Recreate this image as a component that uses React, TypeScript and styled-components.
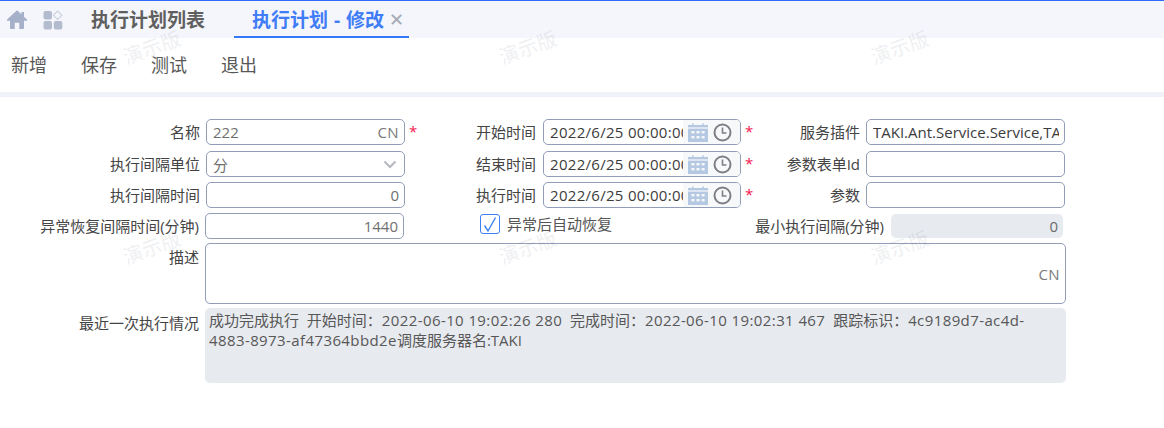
import React from "react";
import styled, { createGlobalStyle } from "styled-components";

const FONT = `"Open Sans", "Noto Sans CJK SC", sans-serif`;

const Global = createGlobalStyle`
  html, body { margin: 0; padding: 0; background: #fff; }
  body { font-family: ${FONT}; font-size: 15px; color: #333; }
  * { box-sizing: border-box; }
`;

const Page = styled.div`
  position: relative;
  width: 1164px;
  height: 428px;
  overflow: hidden;
  background: #fff;
`;

const TabBar = styled.div`
  height: 38px;
  border-top: 1px solid #2f6bff;
  background: #f4f6fb;
  display: flex;
  align-items: flex-start;
`;

const IconSlot = styled.div<{ $w: number }>`
  width: ${(p) => p.$w}px;
  height: 37px;
  display: flex;
  align-items: center;
  justify-content: center;
  flex: none;
`;

const TabPlain = styled.div`
  width: 143px;
  height: 37px;
  display: flex;
  align-items: center;
  font-size: 19px;
  font-weight: 700;
  color: #5f5f5f;
  padding-bottom: 1px;
  flex: none;
  white-space: pre;
`;

const TabActive = styled.div`
  width: 175px;
  height: 37px;
  padding-left: 18px;
  display: flex;
  align-items: center;
  font-size: 19px;
  font-weight: 700;
  color: #3f7cf6;
  border-bottom: 2px solid #3478f6;
  flex: none;
  white-space: pre;
  word-spacing: 1px;
`;

const TabClose = styled.span`
  margin-left: 5px;
  font-size: 18px;
  font-weight: 400;
  color: #a3a9b5;
  line-height: 1;
`;

const Toolbar = styled.div`
  height: 54px;
  background: #fff;
  display: flex;
  align-items: center;
  padding: 0 0 1px 11px;
  gap: 34px;
`;

const ToolButton = styled.div`
  font-size: 18px;
  color: #575757;
  line-height: 24px;
`;

const Band = styled.div`
  height: 5px;
  background: #eff3f9;
`;

const Form = styled.div`
  padding-top: 22px;
  display: flex;
  flex-direction: column;
`;

const Row = styled.div<{ $mt?: number }>`
  display: flex;
  align-items: flex-start;
  margin-top: ${(p) => p.$mt ?? 0}px;
`;

const Label = styled.div<{ $w: number; $gap?: number; $top?: number }>`
  width: ${(p) => p.$w}px;
  margin-right: ${(p) => p.$gap ?? 6}px;
  padding-top: ${(p) => p.$top ?? 2}px;
  text-align: right;
  font-size: 15px;
  line-height: 22px;
  color: #444;
  white-space: nowrap;
  flex: none;
`;

const Box = styled.div<{ $w: number; $h?: number; $align?: string }>`
  width: ${(p) => p.$w}px;
  height: ${(p) => p.$h ?? 26}px;
  border: 1px solid #929db8;
  border-radius: 5px;
  background: #fff;
  display: flex;
  align-items: center;
  justify-content: ${(p) => p.$align ?? "flex-start"};
  padding: 0 5px 0 6px;
  font-size: 15px;
  color: #707070;
  white-space: nowrap;
  overflow: hidden;
  flex: none;
`;

const Suffix = styled.span`
  margin-left: auto;
  color: #7a7a7a;
  letter-spacing: 0.4px;
`;

const Chevron = styled.svg`
  margin-left: auto;
  margin-right: 2px;
`;

const DateText = styled.div`
  flex: none;
  width: 134px;
  overflow: hidden;
  color: #3c3c3c;
  letter-spacing: 0.3px;
`;

const DateIcons = styled.div`
  flex: none;
  height: 24px;
  width: 58px;
  margin-left: -1px;
  background: #f7f8fa;
  display: flex;
  align-items: center;
  gap: 5px;
  padding-left: 5px;
`;

const PluginText = styled.div`
  overflow: hidden;
  color: #3c3c3c;
  width: 100%;
`;

const Star = styled.span<{ $w: number }>`
  width: ${(p) => p.$w}px;
  padding: 4px 0 0 4px;
  color: #f5184f;
  font-size: 15px;
  line-height: 16px;
  flex: none;
`;

const CheckWrap = styled.div`
  width: 20px;
  height: 20px;
  margin: 1px 7px 0 76px;
  border: 1px solid #3b82f0;
  border-radius: 3px;
  display: flex;
  align-items: center;
  justify-content: center;
  flex: none;
`;

const CheckText = styled.div`
  width: 126px;
  flex: none;
  font-size: 15px;
  line-height: 20px;
  color: #555;
  white-space: nowrap;
  padding-top: 1px;
`;

const Disabled = styled.div<{ $w: number }>`
  width: ${(p) => p.$w}px;
  height: 24px;
  margin-top: 1px;
  background: #e7eaef;
  border-radius: 5px;
  display: flex;
  align-items: center;
  justify-content: flex-end;
  padding-right: 5px;
  color: #6b6b6b;
  font-size: 15px;
  flex: none;
`;

const StatusBox = styled.div`
  width: 861px;
  height: 75px;
  background: #e7eaef;
  border-radius: 5px;
  padding: 2px 30px 0 4px;
  font-size: 15px;
  line-height: 20px;
  color: #575757;
  white-space: pre-wrap;
  flex: none;
`;

const Num = styled.span`
  letter-spacing: 0.4px;
`;

const Watermark = styled.div<{ $x: number; $y: number }>`
  position: absolute;
  left: ${(p) => p.$x}px;
  top: ${(p) => p.$y}px;
  font-size: 20px;
  line-height: 24px;
  font-weight: 500;
  color: rgba(90, 100, 120, 0.09);
  transform: rotate(-20deg);
  pointer-events: none;
  white-space: nowrap;
`;

const HomeIcon = () => (
  <svg width="22" height="21" viewBox="0 0 22 21">
    <path fill="#a6b0c8" d="M11 1.2 1 10.6c-.5.5-.2 1.1.5 1.1H4v7.3c0 .6.4 1 1 1h3.7v-6.2h4.6V20H17c.6 0 1-.4 1-1v-7.3h2.5c.7 0 1-.6.5-1.1l-3-2.8V3h-2.6v2.3z" />
  </svg>
);

const AppsIcon = () => (
  <svg width="20" height="20" viewBox="0 0 20 20">
    <rect x="0.5" y="1" width="8.5" height="8.5" rx="2" fill="#b3bccf" />
    <rect x="0.5" y="11" width="8.5" height="8.5" rx="2" fill="#b3bccf" />
    <rect x="10.8" y="11" width="8.5" height="8.5" rx="2" fill="#b3bccf" />
    <rect x="11.6" y="2.2" width="6" height="6" transform="rotate(45 14.6 5.2)" fill="none" stroke="#c5ccdb" strokeWidth="1" />
  </svg>
);

const CalendarIcon = () => (
  <svg width="20" height="19" viewBox="0 0 20 19">
    <path fill="#b4c8e2" d="M0 2h4V.5h1.5V2h9V.5H16V2h4v17H0z" />
    <g fill="#f7f8fa">
      <rect x="0" y="4.4" width="20" height="1.2" />
      <rect x="3.4" y="8" width="3" height="2.4" />
      <rect x="8.5" y="8" width="3" height="2.4" />
      <rect x="13.6" y="8" width="3" height="2.4" />
      <rect x="3.4" y="13" width="3" height="2.4" />
      <rect x="8.5" y="13" width="3" height="2.4" />
      <rect x="13.6" y="13" width="3" height="2.4" />
    </g>
  </svg>
);

const ClockIcon = () => (
  <svg width="19" height="19" viewBox="0 0 19 19" fill="none" stroke="#7c7f86" strokeWidth="2">
    <circle cx="9.5" cy="9.5" r="8" />
    <path d="M9.5 4.6v5.4h4" strokeWidth="1.6" />
  </svg>
);

const DateField = () => (
  <Box $w={198}>
    <DateText>2022/6/25 00:00:00</DateText>
    <DateIcons>
      <CalendarIcon />
      <ClockIcon />
    </DateIcons>
  </Box>
);

const marks: [number, number][] = [
  [122, 36], [498, 36], [870, 36],
  [122, 236], [498, 236], [870, 236],
];

export default function App() {
  return (
    <Page>
      <Global />
      <TabBar>
        <IconSlot $w={34}><HomeIcon /></IconSlot>
        <IconSlot $w={37}><AppsIcon /></IconSlot>
        <IconSlot $w={20} />
        <TabPlain>执行计划列表</TabPlain>
        <TabActive>
          执行计划 - 修改<TabClose>✕</TabClose>
        </TabActive>
      </TabBar>
      <Toolbar>
        <ToolButton>新增</ToolButton>
        <ToolButton>保存</ToolButton>
        <ToolButton>测试</ToolButton>
        <ToolButton>退出</ToolButton>
      </Toolbar>
      <Band />
      <Form>
        <Row>
          <Label $w={200}>名称</Label>
          <Box $w={199}>222<Suffix>CN</Suffix></Box>
          <Star $w={20}>*</Star>
          <Label $w={111} $gap={7}>开始时间</Label>
          <DateField />
          <Star $w={20}>*</Star>
          <Label $w={99}>服务插件</Label>
          <Box $w={199}><PluginText>TAKI.Ant.Service.Service,TAKI.Ant.Service</PluginText></Box>
        </Row>
        <Row $mt={6}>
          <Label $w={200}>执行间隔单位</Label>
          <Box $w={199}>
            分
            <Chevron width="14" height="9" viewBox="0 0 14 9" fill="none" stroke="#b5b8bf" strokeWidth="2">
              <path d="M1.5 1.5 7 7l5.5-5.5" />
            </Chevron>
          </Box>
          <Star $w={20} />
          <Label $w={111} $gap={7}>结束时间</Label>
          <DateField />
          <Star $w={20}>*</Star>
          <Label $w={99}>参数表单Id</Label>
          <Box $w={199} />
        </Row>
        <Row $mt={5}>
          <Label $w={200}>执行间隔时间</Label>
          <Box $w={199} $align="flex-end">0</Box>
          <Star $w={20} />
          <Label $w={111} $gap={7}>执行时间</Label>
          <DateField />
          <Star $w={20}>*</Star>
          <Label $w={99}>参数</Label>
          <Box $w={199} />
        </Row>
        <Row $mt={5}>
          <Label $w={199}>异常恢复间隔时间(分钟)</Label>
          <Box $w={199} $align="flex-end">1440</Box>
          <CheckWrap>
            <svg width="16" height="17" viewBox="0 0 16 17" fill="none" stroke="#3b82f0" strokeWidth="1.4">
              <path d="M2.5 9.5 6 15 13.5 1.5" />
            </svg>
          </CheckWrap>
          <CheckText>异常后自动恢复</CheckText>
          <Label $w={251} $gap={7}>最小执行间隔(分钟)</Label>
          <Disabled $w={172}>0</Disabled>
        </Row>
        <Row $mt={4}>
          <Label $w={199} $top={3}>描述</Label>
          <Box $w={861} $h={61} $align="flex-end">
            <Suffix>CN</Suffix>
          </Box>
        </Row>
        <Row $mt={4}>
          <Label $w={199} $top={4}>最近一次执行情况</Label>
          <StatusBox>
            成功完成执行{"  "}开始时间：<Num>2022-06-10 19:02:26 280</Num>{"  "}完成时间：<Num>2022-06-10 19:02:31 467</Num>{"  "}跟踪标识：<Num>4c9189d7-ac4d-4883-8973-af47364bbd2e</Num>调度服务器名:TAKI
          </StatusBox>
        </Row>
      </Form>
      {marks.map(([x, y]) => (
        <Watermark key={`${x}-${y}`} $x={x} $y={y}>演示版</Watermark>
      ))}
    </Page>
  );
}
